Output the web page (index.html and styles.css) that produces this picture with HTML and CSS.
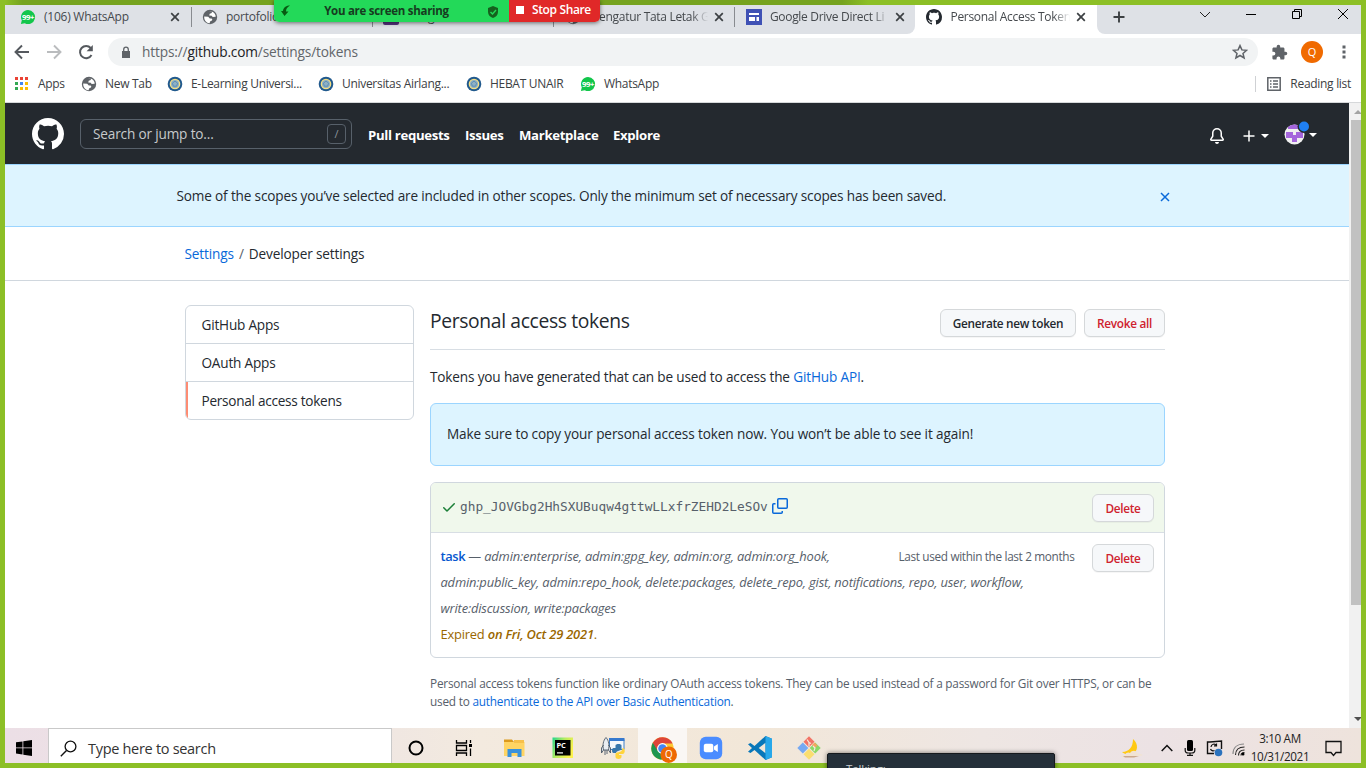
FILE: index.html
```html
<!DOCTYPE html>
<html lang="en">
<head>
<meta charset="utf-8">
<title>Personal Access Tokens</title>
<link rel="stylesheet" href="styles.css">
</head>
<body>
<svg class="defs" aria-hidden="true">
  <symbol id="mark" viewBox="0 0 16 16"><path d="M8 0C3.58 0 0 3.58 0 8c0 3.54 2.29 6.53 5.47 7.59.4.07.55-.17.55-.38 0-.19-.01-.82-.01-1.49-2.01.37-2.53-.49-2.69-.94-.09-.23-.48-.94-.82-1.13-.28-.15-.68-.52-.01-.53.63-.01 1.08.58 1.23.82.72 1.21 1.87.87 2.33.66.07-.52.28-.87.51-1.07-1.78-.2-3.64-.89-3.64-3.95 0-.87.31-1.59.82-2.15-.08-.2-.36-1.02.08-2.12 0 0 .67-.21 2.2.82.64-.18 1.32-.27 2-.27s1.36.09 2 .27c1.53-1.04 2.2-.82 2.2-.82.44 1.1.16 1.92.08 2.12.51.56.82 1.27.82 2.15 0 3.07-1.87 3.75-3.65 3.95.29.25.54.73.54 1.48 0 1.07-.01 1.93-.01 2.2 0 .21.15.46.55.38A8.01 8.01 0 0 0 16 8c0-4.42-3.58-8-8-8z"/></symbol>
  <symbol id="close" viewBox="0 0 10 10"><path d="M1.200 1.200l7.600 7.600M8.800 1.200L1.200 8.800" fill="none" stroke="currentColor" stroke-width="1.700"/></symbol>
  <symbol id="globe" viewBox="0 0 16 16"><circle cx="8" cy="8" r="7.200" fill="#5f6368"/><path fill="#fff" d="M2.200 7.500l4 .3 1.600 1.700h1.700c1 .3 1 1.700 0 2.300l-1.500.7-.3 1.700C4.500 14.300 2 11.500 2.200 7.500zM7 2.200l3 .1-.3 1.700-2 .8-.5 1.700 2.500.2 1 1.300 3-.2c0-2-1-3.500-2.500-4.500L9 2z"/></symbol>
  <symbol id="whatsapp" viewBox="0 0 16 16"><path d="M8 1a7 7 0 1 1-3.200 13.200L.9 15.100l.9-3.800A7 7 0 0 1 8 1z" fill="#12c64b"/><text x="8" y="10.800" text-anchor="middle" font-size="7.800" font-weight="700" font-family="Open Sans, sans-serif" letter-spacing="-.4" fill="#fff">99+</text></symbol>
  <symbol id="seal" viewBox="0 0 16 16"><circle cx="8" cy="8" r="7.300" fill="#20598d"/><circle cx="8" cy="8" r="5.300" fill="#f5df83"/><circle cx="8" cy="8" r="4" fill="#8fb0c4"/><path d="M5.400 7.200L8 5l2.600 2.200-1 3H6.400z" fill="none" stroke="#5a8fb8" stroke-width="1"/></symbol>
</svg>

<div class="screen">
  <div class="tabstrip">
    <div class="tab"><svg class="fav"><use href="#whatsapp"/></svg><span class="title">(106) WhatsApp</span><svg class="x"><use href="#close"/></svg></div>
    <div class="tab sep"><svg class="fav"><use href="#globe"/></svg><span class="title">portofolio</span></div>
    <div class="tab sep"><i class="fav purple"></i><span class="title">Integrasi</span></div>
    <div class="tab sep"><svg class="fav"><use href="#globe"/></svg><span class="title fade">Mengatur Tata Letak G</span><svg class="x"><use href="#close"/></svg></div>
    <div class="tab sep"><svg class="fav" viewBox="0 0 16 16"><path fill="#3f51b5" d="M0 0h16v16H0z"/><path fill="#fff" d="M3 4h10v2H3zM3 8h6v4H3zM10.500 8H13v4h-2.500z"/></svg><span class="title fade">Google Drive Direct Li</span><svg class="x"><use href="#close"/></svg></div>
    <div class="tab active"><svg class="fav gh"><use href="#mark"/></svg><span class="title fade">Personal Access Token</span><svg class="x"><use href="#close"/></svg></div>
    <div class="tabend">
      <svg class="plus" viewBox="0 0 12 12"><path d="M6 .5v11M.5 6h11" stroke="#3c4043" stroke-width="1.900"/></svg>
      <svg class="win" viewBox="0 0 12 12"><path d="M1 4L6 9l5-5" fill="none" stroke="#222"/></svg>
      <svg class="win" viewBox="0 0 12 12"><path d="M1 6.500h10" stroke="#000"/></svg>
      <svg class="win" viewBox="0 0 12 12"><path d="M1.500 3.500h7v7h-7zM3.500 3.500v-2h7v7h-2" fill="none" stroke="#000"/></svg>
      <svg class="win" viewBox="0 0 12 12"><path d="M1 1l10 10M11 1L1 11" stroke="#000"/></svg>
    </div>
  </div>

  <div class="toolbar">
    <svg class="nav" viewBox="0 0 16 16"><path d="M15 8H2M8 1.500L1.500 8 8 14.500" fill="none" stroke="#55595e" stroke-width="1.900"/></svg>
    <svg class="nav" viewBox="0 0 16 16"><path d="M1 8h13M8 1.500L14.500 8 8 14.500" fill="none" stroke="#babcbe" stroke-width="1.900"/></svg>
    <svg class="nav" viewBox="0 0 16 16"><path d="M13.500 11A6.100 6.100 0 1 1 12.700 4" fill="none" stroke="#55595e" stroke-width="2"/><path d="M14.800 1v6.200H8.600z" fill="#55595e"/></svg>
    <div class="omnibox">
      <svg class="lock" viewBox="0 0 10 13"><path d="M1 5h8v7H1z" fill="#5f6368"/><path d="M2.700 5V3.400a2.300 2.300 0 0 1 4.600 0V5" fill="none" stroke="#5f6368" stroke-width="1.300"/></svg>
      <span class="url">https://<b>github.com</b>/settings/tokens</span>
      <svg class="star" viewBox="0 0 16 16"><path d="M8 1.600l1.900 4.300 4.700.4-3.600 3.100 1.100 4.600L8 11.500 3.900 14 5 9.400 1.400 6.300l4.700-.4z" fill="none" stroke="#5f6368" stroke-width="1.500"/></svg>
    </div>
    <svg class="puzzle" viewBox="0 0 24 24"><path fill="#5f6368" d="M20.500 11H19V7c0-1.100-.9-2-2-2h-4V3.500a2.500 2.500 0 0 0-5 0V5H4c-1.100 0-2 .9-2 2v3.800h1.500a2.700 2.700 0 0 1 0 5.400H2V20c0 1.100.9 2 2 2h3.800v-1.500a2.700 2.700 0 0 1 5.400 0V22H17c1.100 0 2-.9 2-2v-4h1.500a2.500 2.500 0 0 0 0-5z"/></svg>
    <span class="profile">Q</span>
    <svg class="dots" viewBox="0 0 4 14"><path fill="#5f6368" d="M.5.500h3v3h-3zM.5 5.500h3v3h-3zM.5 10.500h3v3h-3z"/></svg>
  </div>

  <div class="bookmarks">
    <a class="bm b1"><svg class="apps" viewBox="0 0 13 13"><path fill="#ea4335" d="M0 0h3v3H0zM5 0h3v3H5zM10 0h3v3h-3z"/><path fill="#34a853" d="M0 5h3v3H0zM0 10h3v3H0z"/><path fill="#4285f4" d="M5 5h3v3H5z"/><path fill="#fbbc04" d="M10 5h3v3h-3zM5 10h3v3H5zM10 10h3v3h-3z"/></svg>Apps</a>
    <a class="bm b2"><svg><use href="#globe"/></svg>New Tab</a>
    <a class="bm b3"><svg><use href="#seal"/></svg>E-Learning Universi...</a>
    <a class="bm b4"><svg><use href="#seal"/></svg>Universitas Airlang...</a>
    <a class="bm b5"><svg><use href="#seal"/></svg>HEBAT UNAIR</a>
    <a class="bm b6"><svg><use href="#whatsapp"/></svg>WhatsApp</a>
    <a class="bm reading"><svg viewBox="0 0 14 14"><path d="M.8.800h12.400v12.400H.8z" fill="none" stroke="#5f6368" stroke-width="1.500"/><path d="M3 4h1.500M6 4h5M3 7h1.500M6 7h5M3 10h1.500M6 10h5" stroke="#5f6368" stroke-width="1.400"/></svg>Reading list</a>
  </div>

  <div class="viewport">
    <div class="page">
      <header class="ghead">
        <svg class="logo"><use href="#mark"/></svg>
        <div class="search"><span>Search or jump to...</span><i>/</i></div>
        <nav><a class="n1">Pull requests</a><a class="n2">Issues</a><a class="n3">Marketplace</a><a>Explore</a></nav>
        <div class="user">
          <svg class="bell" viewBox="0 0 16 16"><path fill="#fff" d="M8 16a2 2 0 0 0 1.985-1.750c.017-.137-.097-.25-.235-.25h-3.500c-.138 0-.252.113-.235.250A2 2 0 0 0 8 16z"/><path fill="#fff" fill-rule="evenodd" d="M8 1.500A3.500 3.500 0 0 0 4.500 5v2.947c0 .346-.102.683-.294.970l-1.703 2.556a.18.180 0 0 0-.003.010l.001.006.004.006.006.004.007.001h10.964l.007-.001.006-.004.004-.006.001-.007-.003-.009-1.703-2.557a1.750 1.750 0 0 1-.294-.970V5A3.500 3.500 0 0 0 8 1.500zM3 5a5 5 0 0 1 10 0v2.947c0 .050.015.098.042.139l1.703 2.555A1.518 1.518 0 0 1 13.482 13H2.518a1.518 1.518 0 0 1-1.263-2.360l1.703-2.554A.25.250 0 0 0 3 7.947z"/></svg>
          <svg class="add" viewBox="0 0 12 12"><path d="M6 .5v11M.5 6h11" stroke="#fff" stroke-width="1.500"/></svg>
          <i class="caret"></i>
          <svg class="avatar" viewBox="0 0 26 24"><defs><clipPath id="face"><circle cx="10.500" cy="13.500" r="10"/></clipPath></defs><g clip-path="url(#face)"><path fill="#f0f0f0" d="M0 3h22v22H0z"/><path fill="#a566dc" d="M4 3h13v5H4zM2 11h7v3h3v-3h7v6h-6v4H8v-4H2z"/></g><circle cx="20" cy="5.500" r="6.500" fill="#24292f"/><circle cx="20" cy="5.500" r="5" fill="#1f80f5"/></svg>
          <i class="caret last"></i>
        </div>
      </header>

      <div class="flash"><span>Some of the scopes you’ve selected are included in other scopes. Only the minimum set of necessary scopes has been saved.</span><svg viewBox="0 0 10 10"><path d="M1 1l8 8M9 1L1 9" stroke="#0969da" stroke-width="1.500"/></svg></div>

      <div class="crumbs"><a>Settings</a><i>/</i><span>Developer settings</span></div>

      <div class="columns">
        <nav class="menu"><a>GitHub Apps</a><a>OAuth Apps</a><a class="current">Personal access tokens</a></nav>
        <main>
          <div class="subhead"><h2>Personal access tokens</h2><button class="gen">Generate new token</button><button class="danger revoke">Revoke all</button></div>
          <p class="intro">Tokens you have generated that can be used to access the <a>GitHub API</a>.</p>
          <div class="notice">Make sure to copy your personal access token now. You won’t be able to see it again!</div>
          <div class="tokens">
            <div class="fresh">
              <svg class="check" viewBox="0 0 16 16"><path fill="#1a7f37" d="M13.780 4.220a.75.750 0 0 1 0 1.060l-7.250 7.250a.75.750 0 0 1-1.060 0L2.220 9.280a.75.750 0 0 1 1.060-1.060L6 10.940l6.720-6.720a.75.750 0 0 1 1.060 0z"/></svg>
              <code>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</code>
              <svg class="copy" viewBox="0 0 16 16"><path d="M6.750.750h7.500a1 1 0 0 1 1 1v7.500a1 1 0 0 1-1 1h-7.500a1 1 0 0 1-1-1v-7.500a1 1 0 0 1 1-1zM3.500 5.750H1.750a1 1 0 0 0-1 1v7.500a1 1 0 0 0 1 1h7.500a1 1 0 0 0 1-1V13" fill="none" stroke="#0969da" stroke-width="1.500"/></svg>
              <button class="danger del">Delete</button>
            </div>
            <div class="row">
              <div class="side"><span>Last used within the last 2 months</span><button class="danger del">Delete</button></div>
              <div class="scopes"><b>task</b> — <em>admin:enterprise, admin:gpg_key, admin:org, admin:org_hook,<br>admin:public_key, admin:repo_hook, delete:packages, delete_repo, gist, notifications, repo, user, workflow,<br>write:discussion, write:packages</em></div>
              <div class="expired">Expired <strong>on Fri, Oct 29 2021</strong>.</div>
            </div>
          </div>
          <p class="foot">Personal access tokens function like ordinary OAuth access tokens. They can be used instead of a password for Git over HTTPS, or can be<br>used to <a>authenticate to the API over Basic Authentication</a>.</p>
        </main>
      </div>
    </div>
    <div class="scroll"><i class="up"></i><div class="thumb"></div><i class="down"></i></div>
  </div>

  <div class="taskbar">
    <div class="start"><svg viewBox="0 0 16 16"><path d="M0 2.300l6.500-.9v6.100H0zM7.300 1.300L16 0v7.500H7.300zM0 8.300h6.500v6.200L0 13.600zM7.300 8.300H16V16l-8.700-1.300z"/></svg></div>
    <div class="find"><svg viewBox="0 0 17 17"><circle cx="10.500" cy="6.500" r="5.400" fill="none" stroke="#111" stroke-width="1.300"/><path d="M6.500 10.500L.8 16.200" stroke="#111" stroke-width="1.400"/></svg><span>Type here to search</span></div>
    <div class="apps-row">
      <div><svg viewBox="0 0 24 24"><circle cx="12" cy="12" r="6.500" fill="none" stroke="#000" stroke-width="2"/></svg></div>
      <div><svg viewBox="0 0 24 24"><path d="M3.500 4v3h10V4M3.500 20v-3h10v3M3.500 9.500h10v5h-10zM17.500 4v3M17.500 12.500V20" fill="none" stroke="#000" stroke-width="1.300"/><path d="M16 8h3v3h-3z"/></svg></div>
      <div><svg viewBox="0 0 24 24"><path fill="#dc9a1d" d="M2 3.500h8l2 2.500H2z"/><path fill="#ffd463" d="M2 6h20.500v14H2z"/><path fill="#f7c04a" d="M12 4h10v3H12z"/><path fill="#3a92dc" d="M5.500 13h14v8h-4v-4h-6v4h-4z"/></svg></div>
      <div><svg viewBox="0 0 24 24"><defs><linearGradient id="pc" x1="0" y1="0" x2="1" y2=".5"><stop offset="0" stop-color="#20d68e"/><stop offset=".5" stop-color="#b6ec60"/><stop offset="1" stop-color="#fcf24c"/></linearGradient></defs><path fill="url(#pc)" d="M1.500 1.500h20.500v20.500H1.500z"/><path d="M4 4h15.500v15.500H4z"/><text x="5.500" y="12" font-size="7.500" font-weight="700" font-family="Open Sans, sans-serif" fill="#fff">PC</text><path fill="#fff" d="M6 16.300h6v1.200H6z"/></svg></div>
      <div><svg viewBox="0 0 24 24"><path fill="#f5f7fa" stroke="#3e80c9" d="M8.500 3.500H23v10H8.500z"/><path fill="#3679ce" d="M8 2h15.500v3H8z"/><path fill="#e9edf2" stroke="#4b5866" stroke-width=".9" d="M5 1.500C8 5 8.500 9 7.500 14h-5C1.500 9 2 5 5 1.500zM2.500 9L.5 12v5l2-3M7.500 9l2 3v5l-2-3M4 14v5M6 14v4"/><path fill="#3776ab" d="M14.500 12V9.500c0-2 6-2 6 0V13c0 2-5 1-5.500 4h-2.500c-2 0-2-5 0-5h4z"/><path fill="#ffd43b" d="M21.500 12c3 0 3 6 0 6H18v1h2.500v2c0 2.500-6 2.500-6 0v-3c0-2.500 6-1 6.500-4z"/></svg></div>
      <div class="on"><svg viewBox="0 0 26 26"><circle cx="12" cy="12" r="10.800" fill="#fcc934"/><path fill="#1e9650" d="M12 12 2.700 6.600A10.800 10.800 0 0 0 11 22.800l4.500-7.700z"/><path fill="#de4539" d="M2.700 6.600A10.800 10.800 0 0 1 21.800 7.200H12L7.500 14.500z"/><circle cx="12" cy="12" r="5.200" fill="#fff"/><circle cx="12" cy="12" r="4.100" fill="#4285f4"/><circle cx="18" cy="18" r="8" fill="#ee6903"/><text x="18" y="21.300" text-anchor="middle" font-size="9.500" font-family="Open Sans, sans-serif" fill="#fff">Q</text></svg></div>
      <div><svg viewBox="0 0 24 24"><rect x=".8" y=".8" width="22.400" height="22.400" rx="6" fill="#4a8cff"/><rect x="4.800" y="7.800" width="9.500" height="8.500" rx="2" fill="#fff"/><path fill="#fff" d="M15 10.500l3.800-2.500v8L15 13.500z"/></svg></div>
      <div><svg viewBox="0 0 24 24"><path fill="#0877b9" d="M17.500 0L24 2.800v18.400L17.500 24 6.500 14 2.500 17 0 15.700 4 12 0 8.300 2.500 7l4 3zM17.500 6.800L10.700 12l6.800 5.200z"/><path fill="#28a8ea" d="M17.500 0L24 2.800v18.400L17.500 24z"/></svg></div>
      <div><svg viewBox="0 0 24 24"><path fill="#f27366" d="M12 .3l5.500 5.500-5.500 5.500-5.500-5.500z"/><path fill="#8ad867" d="M18.200 6.500l5.500 5.500-5.500 5.500-5.500-5.500z"/><path fill="#76a9f2" d="M5.800 6.500l5.500 5.500-5.500 5.500L.3 12z"/><path fill="#fade70" d="M12 12.700l5.500 5.500-5.500 5.500-5.500-5.500z"/><path fill="#f4a461" d="M15 9l2.500-2.500 3 3-2.500 2.500z"/><path d="M10 3.500l2 3v4M12 6.500l2 1M16 10l2 2-1 3" fill="none" stroke="#f4eadc" stroke-width="1.200"/></svg></div>
    </div>
    <div class="tray">
      <svg class="moon" viewBox="0 0 24 20"><path fill="#ffc913" d="M13 0c6 5 5 13-1 15-4 1-8 0-10-2C9 13 13 8 13 0z"/><path fill="#f1e3d3" d="M5 16c1-3 4-3 5-2 2-3 6-3 7 0l5 1.500c2 1-3 1.500-6 1.500l-1 1.500H4c-4-.5-4-1.500 1-2.500z"/><path fill="#cba88c" d="M3 17h16l-5 1.500H5z"/></svg>
      <svg class="chev" viewBox="0 0 12 8"><path d="M.7 7L6 1.500 11.300 7" fill="none" stroke="#111" stroke-width="1.500"/></svg>
      <svg class="mic" viewBox="0 0 12 16"><rect x="3" y="0" width="6" height="11" rx="1.500"/><path d="M1.200 8v2.500c0 2 1.300 2.500 3 2.500h3.600c1.700 0 3-.5 3-2.500V8M6 13v2.500M3 15.400h6" fill="none" stroke="#111" stroke-width="1.200"/></svg>
      <svg class="sync" viewBox="0 0 17 17"><path d="M4 2H1.500v11.500H8M4 2l11.500-1v8M4 2H1" fill="none" stroke="#111" stroke-width="1.400"/><path d="M10.500 5.500A3 3 0 0 0 5 7M4.500 9a3 3 0 0 0 4 1.500M10.500 3.500v2.300H8" fill="none" stroke="#111" stroke-width="1.200"/><circle cx="12.500" cy="12.500" r="3.800" fill="#2b72bd"/></svg>
      <svg class="wifi" viewBox="0 0 13 13"><g fill="none" stroke="#222" stroke-width="1.100"><path d="M1 11C1 5 5 1 12 1" stroke="#888"/><path d="M3.500 12c0-5 3-8 9-8"/><path d="M6.500 12.500c0-3 2-5.500 6-5.500M9 12.500c0-1.500 1-3 3.500-3"/></g><circle cx="11" cy="11" r="1.500"/></svg>
      <div class="clock"><span>3:10 AM</span><span>10/31/2021</span></div>
      <svg class="action" viewBox="0 0 17 17"><path d="M1 1.500h15v11h-5l-2.500 3-2.500-3H1z" fill="none" stroke="#111" stroke-width="1.300"/></svg>
    </div>
  </div>
</div>

<div class="shade"></div>
<div class="share">
  <div class="sharing"><svg class="arrow" viewBox="0 0 10 12"><path fill="#075b12" d="M9.500.500C6 .5 3 2 2.500 6H.5L4 11l4-4.500H5.500C5.500 3.500 7 2 9.500.500z"/></svg><span>You are screen sharing</span><svg class="shield" viewBox="0 0 12 12"><path fill="#15611e" d="M6 0l5 2v4c0 3-2 5-5 6C3 11 1 9 1 6V2z"/><path d="M3.500 6l2 2 3.500-4" fill="none" stroke="#23d959" stroke-width="1.400"/></svg></div>
  <div class="stop"><i></i><span>Stop Share</span></div>
</div>
<div class="talking">Talking:</div>
</body>
</html>
```
FILE: styles.css
```css
* { box-sizing: border-box; }
body { margin: 0; width: 1366px; height: 768px; overflow: hidden; position: relative; background: #8cbf26; font-family: "Open Sans", "Noto Sans", sans-serif; font-size: 13.6px; letter-spacing: -0.16px; color: #24292f; white-space: nowrap; }
svg { display: block; flex: none; }
i { font-style: normal; }
p, h2 { margin: 0; font-weight: 400; }
a { color: #0969da; }
.defs { position: absolute; width: 0; height: 0; }
.screen { margin: 5px; width: 1356px; height: 758px; display: flex; flex-direction: column; background: #fff; overflow: hidden; position: absolute; }

/* Browser tabs */
.tabstrip { height: 29px; display: flex; background: #fff; font-size: 12px; letter-spacing: -0.24px; color: #45494d; flex: none; }
.tab { width: 181.3px; display: flex; align-items: center; padding: 0 10px 5px 11.500px; background: #dee1e6; position: relative; flex: none; }
.tab:first-child { width: 185.5px; padding: 0 11px 5px 15px; }
.sep::before { content: ""; position: absolute; left: 0; top: 2px; width: 1px; height: 20px; background: #888b90; }
.tab:nth-child(5) { border-bottom-right-radius: 8px; width: 180.6px; padding-right: 9.500px; }
.fav { width: 16px; height: 16px; margin-right: 8px; flex: none; }
.fav.gh { fill: #24292f; }
.fav.purple { background: #56337e; border-radius: 2px; }
.title { flex: 1; overflow: hidden; line-height: 18px; }
.fade { margin-right: 6px; letter-spacing: -0.300px; -webkit-mask-image: linear-gradient(90deg, #000 86%, transparent); mask-image: linear-gradient(90deg, #000 86%, transparent); }
.x { width: 10px; height: 10px; color: #3c4043; }
.tab.active { background: #fff; width: 182px; padding-right: 11px; }
.tabend { flex: 1; background: #dee1e6; border-bottom-left-radius: 8px; display: flex; align-items: flex-start; padding-right: 12px; }
.plus { width: 12px; height: 12px; margin: 6px 74px 0 16px; }
.win { width: 12px; height: 12px; margin-top: 3px; margin-right: 34px; }
.win:last-child { margin-right: 0; }

/* Toolbar */
.toolbar { height: 36px; display: flex; align-items: center; padding-left: 9px; flex: none; }
.nav { width: 16px; height: 16px; margin-right: 16px; }
.omnibox { height: 28px; width: 1150px; margin-left: -2px; border-radius: 14px; background: #f1f3f4; display: flex; align-items: center; padding-left: 13px; flex: none; }
.lock { width: 10px; height: 13px; margin-right: 11px; }
.url { color: #62666a; font-size: 13.7px; flex: 1; margin-top: -1px; }
.url b { font-weight: 400; color: #202124; }
.star { width: 16px; height: 16px; margin-right: 10px; }
.puzzle { width: 17px; height: 17px; margin-left: 13px; }
.profile { width: 22px; height: 22px; border-radius: 50%; margin-left: 13px; background: #f06a00; color: #fff; text-align: center; font-size: 11px; line-height: 22px; }
.dots { width: 4px; height: 14px; margin-left: 19px; }

.bookmarks { height: 33px; border-bottom: 1px solid #d6d8da; display: flex; align-items: center; padding: 0 9px 5px 9px; font-size: 12px; letter-spacing: -0.3px; flex: none; }
.bm { display: flex; align-items: center; color: #3c4043; }
.bm svg { width: 16px; height: 16px; margin-right: 8px; }
.bm svg.apps { width: 13px; height: 13px; margin: 0 10px 0 1px; }
.b1 { width: 67px; } .b2 { width: 86px; } .b3 { width: 151px; } .b4 { width: 148px; } .b5 { width: 114px; }
.reading { margin-left: auto; margin-right: 1px; border-left: 1px solid #cfd1d4; padding-left: 11px; height: 16px; }
.bm.reading svg { width: 14px; height: 14px; margin-right: 9px; }

/* Web page */
.viewport { height: 625px; display: flex; flex: none; }
.page { width: 1344px; }
.ghead { height: 61px; background: #24292f; display: flex; align-items: center; padding: 0 32px 0 27px; color: #fff; }
.logo { width: 32px; height: 32px; fill: #fff; margin-right: 16px; }
.search { width: 272px; height: 30px; border: 1px solid #57606a; border-radius: 6px; display: flex; align-items: center; justify-content: space-between; padding: 0 5px 0 12px; color: #c7c9cb; }
.search i { width: 19px; height: 20px; border: 1px solid #57606a; border-radius: 4px; text-align: center; font-size: 11px; line-height: 18px; color: #8c949c; }
.ghead nav { display: flex; padding-top: 2px; margin-left: 16px; }
.ghead nav a { color: #fff; font-weight: 700; font-size: 13.200px; letter-spacing: -0.330px; }
.n1 { width: 97px; } .n2 { width: 54px; } .n3 { width: 94px; }
.user { margin-left: auto; display: flex; align-items: center; padding-top: 4px; }
.bell { width: 16px; height: 16px; margin-right: 18px; }
.add { width: 12px; height: 12px; margin-right: 6px; }
.caret { border: 4px solid transparent; border-top-color: #fff; border-bottom: 0; }
.caret.last { margin-top: -2px; }
.avatar { width: 26px; height: 24px; margin: -5px -1px 0 15px; }
.flash { height: 63px; background: #ddf4ff; border: solid #9bd5ff; border-width: 1px 0; display: flex; align-items: center; justify-content: space-between; padding: 0 179px 0 171.500px; letter-spacing: -0.160px; }
.flash svg { width: 10px; height: 10px; margin-top: 2px; }
.crumbs { height: 54px; border-bottom: 1px solid #d0d7de; display: flex; align-items: center; padding: 0 0 0 179.500px; letter-spacing: -0.130px; }
.crumbs i { margin: 0 5px; color: #57606a; }
.columns { display: flex; width: 980px; margin: 24px 0 0 180px; gap: 16px; align-items: flex-start; }
.menu { width: 229px; border: 1px solid #d0d7de; border-radius: 6px; overflow: hidden; flex: none; }
.menu a { display: block; height: 38px; line-height: 38px; padding-left: 15.500px; color: #24292f; border-bottom: 1px solid #d0d7de; letter-spacing: -0.200px; }
.menu .current { height: 37px; border: 0; border-left: 2px solid #fd8c73; padding-left: 13.500px; letter-spacing: -0.270px; }
main { width: 735px; }
.subhead { height: 45px; border-bottom: 1px solid #d8dee4; display: flex; gap: 8px; padding-top: 4px; }
h2 { font-size: 19.300px; letter-spacing: -0.350px; line-height: 24px; flex: 1; }
button { height: 28px; padding: 0; border: 1px solid #d5d8da; border-radius: 6px; background: #f6f8fa; box-shadow: 0 1px 0 #1b1f240a; font: 600 11.800px "Open Sans", sans-serif; letter-spacing: -0.300px; color: #24292f; flex: none; }
.danger { color: #cf222e; }
.gen { width: 136px; } .revoke { width: 81px; } .del { width: 62px; }
.intro { margin-top: 16px; line-height: 21px; letter-spacing: -0.160px; }
.notice { margin-top: 16px; height: 63px; line-height: 59px; padding-left: 16px; border: 1px solid #9bd5ff; border-radius: 6px; background: #ddf4ff; letter-spacing: -0.120px; }
.tokens { margin-top: 16px; height: 176px; border: 1px solid #d0d7de; border-radius: 6px; overflow: hidden; color: #57606a; font-size: 12.900px; letter-spacing: -0.170px; }
.fresh { height: 50px; background: #f0f8ec; border-bottom: 1px solid #d8dee4; display: flex; align-items: center; padding: 0 10px; }
.check { width: 16px; height: 16px; margin: -2px 3px 0 0; }
.fresh code { font: 12.790px "DejaVu Sans Mono", monospace; letter-spacing: 0; margin-top: -2px; }
.copy { width: 16px; height: 16px; margin: -4px 0 0 4px; }
.fresh .del { margin-left: auto; }
.row { padding: 10px 10px 0 9.500px; line-height: 26px; }
.side { float: right; display: flex; font-size: 11.800px; letter-spacing: -0.350px; gap: 17.500px; padding-top: 1px; }
.side span { margin-top: -1px; }
.scopes b { color: #0757cf; font-weight: 600; letter-spacing: -0.400px; }
.expired { color: #9a6700; letter-spacing: -0.200px; }
.expired strong { font-style: italic; font-weight: 600; }
.foot { margin-top: 16px; line-height: 18px; font-size: 11.800px; letter-spacing: -0.215px; color: #57606a; }
.scroll { width: 12px; background: #f1f1f1; display: flex; flex-direction: column; align-items: flex-end; padding: 7px 0 7px 2px; }
.up, .down { border: 4px solid transparent; margin-right: -1px; }
.up { border-top: 0; border-bottom-color: #a3a3a3; }
.down { border-bottom: 0; border-top-color: #505050; margin-top: auto; }
.thumb { width: 10px; height: 485px; background: #c1c1c1; margin-top: 6px; }

/* Taskbar */
.taskbar { height: 35px; flex: none; display: flex; background: linear-gradient(90deg, #ecdfe6, #eee5e3 25%, #f3eadf 35%, #f2e7d8 55%, #eee6e3 72%, #ece2e4 85%, #eee3dc); }
.start { width: 43px; padding: 12px 0 0 11px; }
.start svg { width: 16px; height: 16px; }
.find { width: 344px; border: 1px solid #c9c9c9; border-bottom: 0; background: #fff; display: flex; align-items: center; padding: 5px 0 0 11px; font-size: 14.500px; letter-spacing: -0.300px; color: #333; }
.find svg { width: 17px; height: 17px; margin-right: 11px; }
.apps-row { display: flex; }
.apps-row div { width: 49.200px; height: 35px; padding: 8px 0 0 11.900px; }
.apps-row div.on { background: #faf7f4; }
.apps-row svg { width: 24px; height: 24px; }
.apps-row .on svg { width: 27px; height: 27px; }
.tray { margin-left: auto; display: flex; align-items: flex-start; padding-right: 19.500px; }
.moon { width: 24px; height: 20px; margin: 11px 17px 0 0; }
.chev { width: 12px; height: 8px; margin: 16px 11px 0 0; }
.mic { width: 12px; height: 16px; margin: 12px 10.500px 0 0; }
.sync { width: 17px; height: 17px; margin: 12px 9px 0 0; }
.wifi { width: 13px; height: 13px; margin: 15px 6px 0 0; }
.clock { width: 58px; display: flex; flex-direction: column; align-items: center; font-size: 11.700px; letter-spacing: -0.350px; line-height: 18px; color: #222; padding-top: 1px; margin-right: 15.500px; }
.action { width: 17px; height: 17px; margin-top: 12px; }

/* Floating meeting controls */
.shade { position: absolute; left: 5px; top: 0; width: 863px; height: 5px; background: linear-gradient(90deg, #76a31f00, #76a31f 2%, #76a31f 97%, #76a31f00); }
.share { position: absolute; left: 274px; top: 0; width: 326px; height: 22px; display: flex; border-radius: 0 0 5px 5px; overflow: hidden; box-shadow: 0 1px 4px #0008; font-size: 11.500px; letter-spacing: -0.280px; font-weight: 700; }
.sharing { width: 235px; background: #23d959; display: flex; align-items: center; color: #163c20; padding: 0 10px 0 6px; justify-content: space-between; }
.sharing span { margin: -1px 5px 0 0; }
.arrow { width: 11px; height: 12px; }
.shield { width: 12px; height: 12px; margin-top: 2px; }
.stop { flex: 1; background: #e02828; color: #fff; display: flex; align-items: center; padding: 0 0 2px 7px; font-weight: 600; font-size: 12px; letter-spacing: -0.370px; }
.stop i { width: 8px; height: 8px; background: #fff; margin-right: 8px; }
.stop span { margin-top: -1px; }
.talking { position: absolute; left: 827px; top: 753px; width: 228px; height: 20px; background: #25303a; border: 1px solid #15191d; border-radius: 2px; box-shadow: 0 0 5px #0008; color: #c8ccd0; font-size: 11.500px; line-height: 16px; padding: 7px 0 0 18px; }
```
